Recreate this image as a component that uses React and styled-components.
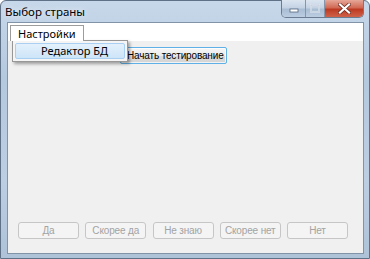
import styled, { createGlobalStyle } from 'styled-components';

const Global = createGlobalStyle`
  html, body {
    margin: 0;
    padding: 0;
    width: 370px;
    height: 259px;
    overflow: hidden;
    background: #ffffff;
  }
`;

const Window = styled.div`
  width: 370px;
  height: 259px;
  box-sizing: border-box;
  display: flex;
  flex-direction: column;
  border: 1px solid #5f7186;
  border-radius: 6px 6px 0 0;
  background: linear-gradient(180deg, #c7d8ea 0%, #b4c8de 30%, #bccee2 70%, #aec2d8 100%);
  font-family: 'Noto Sans', 'Liberation Sans', sans-serif;
`;

const TitleBar = styled.div`
  height: 21px;
  display: flex;
  align-items: flex-start;
  justify-content: space-between;
  padding-left: 4px;
`;

const Title = styled.span`
  font-size: 11.5px;
  line-height: 16px;
  margin-top: 3px;
  color: #000;
  text-shadow: 0 0 6px rgba(255, 255, 255, 0.9);
`;

const CaptionGroup = styled.div`
  display: flex;
  margin-right: 5px;
  margin-top: -1px;
  border: 1px solid #6b7c90;
  border-top: none;
  border-radius: 0 0 5px 5px;
  overflow: hidden;
`;

const CaptionButton = styled.div`
  width: ${p => p.$w}px;
  height: 17px;
  display: flex;
  align-items: center;
  justify-content: center;
  background: ${p =>
    p.$close
      ? 'linear-gradient(180deg, #e6a798 0%, #d06a55 45%, #bd3a22 55%, #d0624a 100%)'
      : 'linear-gradient(180deg, #dbe5f0 0%, #c4d3e4 45%, #a9bdd4 55%, #bccde0 100%)'};
  border-left: ${p => (p.$first ? 'none' : '1px solid #8596aa')};
`;

const Client = styled.div`
  flex: 1;
  margin: 0 5px 4px 6px;
  border: 1px solid #8193a7;
  background: #f0f0f0;
  display: flex;
  flex-direction: column;
  position: relative;
`;

const MenuStrip = styled.div`
  height: 18px;
  box-sizing: border-box;
  padding: 2px 0 0 2px;
  background: #ffffff;
  display: flex;
  align-items: flex-start;
`;

const MenuItem = styled.div`
  font-size: 11px;
  line-height: 15px;
  padding: 0 7px;
  height: 16px;
  box-sizing: border-box;
  border: 1px solid ${p => (p.$open ? '#9c9c9c' : 'transparent')};
  border-bottom: none;
  background: #fff;
  color: #000;
  position: relative;
  z-index: 3;
`;

const Body = styled.div`
  flex: 1;
  display: flex;
  flex-direction: column;
  padding: 6px 14px 14px 10px;
`;

const StartButton = styled.button`
  align-self: flex-start;
  margin-left: 102px;
  width: 107px;
  height: 17px;
  padding: 0 0 0 6px;
  text-align: left;
  white-space: nowrap;
  box-sizing: border-box;
  border: 1px solid #5fb0e6;
  border-radius: 2px;
  background: linear-gradient(180deg, #f6f6f6 0%, #ebebeb 50%, #dcdcdc 51%, #d4d4d4 100%);
  box-shadow: inset 0 0 0 1px rgba(255, 255, 255, 0.7);
  font-family: 'Liberation Sans', Arial, sans-serif;
  font-size: 10px;
  letter-spacing: -0.15px;
  color: #000;
`;

const ButtonRow = styled.div`
  margin-top: auto;
  display: flex;
  gap: 6.25px;
`;

const DisabledButton = styled.button`
  width: 61px;
  height: 17px;
  padding: 0;
  white-space: nowrap;
  box-sizing: border-box;
  border: 1px solid #c6c6c6;
  border-radius: 3px;
  background: #f4f4f4;
  color: #a3a3a3;
  font-family: 'Liberation Sans', Arial, sans-serif;
  font-size: 10px;
  letter-spacing: -0.15px;
`;

const Dropdown = styled.div`
  position: absolute;
  left: 4px;
  top: 17px;
  width: 116px;
  height: 22px;
  box-sizing: border-box;
  padding: 2px;
  background: #f5f5f5;
  border: 1px solid #979797;
  box-shadow: 2px 2px 3px rgba(0, 0, 0, 0.35);
  z-index: 2;
`;

const DropdownItem = styled.div`
  height: 16px;
  box-sizing: border-box;
  border: 1px solid #a9d0f2;
  border-radius: 2px;
  background: linear-gradient(180deg, #e4f1fc 0%, #cde4f8 100%);
  font-size: 11px;
  line-height: 14px;
  padding-left: 25px;
  color: #000;
`;

const answers = ['Да', 'Скорее да', 'Не знаю', 'Скорее нет', 'Нет'];

function Glyph({ type }) {
  if (type === 'min') {
    return (
      <svg width="10" height="8" viewBox="0 0 10 8">
        <rect x="1" y="4" width="8" height="3" fill="#fff" stroke="#55677d" strokeWidth="0.8" />
      </svg>
    );
  }
  if (type === 'max') {
    return (
      <svg width="10" height="9" viewBox="0 0 10 9">
        <rect x="1" y="1" width="8" height="7" fill="none" stroke="#eef3f8" strokeWidth="1.4" />
        <rect x="1" y="1" width="8" height="7" fill="none" stroke="#9badc2" strokeWidth="0.5" />
      </svg>
    );
  }
  return (
    <svg width="13" height="11" viewBox="0 0 13 11">
      <path d="M2 1.5 L11 9.5 M11 1.5 L2 9.5" stroke="#6b2a20" strokeWidth="3.6" strokeLinecap="square" />
      <path d="M2 1.5 L11 9.5 M11 1.5 L2 9.5" stroke="#ffffff" strokeWidth="2.2" strokeLinecap="square" />
    </svg>
  );
}

export default function App() {
  return (
    <>
      <Global />
      <Window>
        <TitleBar>
          <Title>Выбор страны</Title>
          <CaptionGroup>
            <CaptionButton $w={23} $first>
              <Glyph type="min" />
            </CaptionButton>
            <CaptionButton $w={18}>
              <Glyph type="max" />
            </CaptionButton>
            <CaptionButton $w={38} $close>
              <Glyph type="close" />
            </CaptionButton>
          </CaptionGroup>
        </TitleBar>
        <Client>
          <MenuStrip>
            <MenuItem $open>Настройки</MenuItem>
          </MenuStrip>
          <Body>
            <StartButton>Начать тестирование</StartButton>
            <ButtonRow>
              {answers.map(a => (
                <DisabledButton key={a} disabled>
                  {a}
                </DisabledButton>
              ))}
            </ButtonRow>
          </Body>
          <Dropdown>
            <DropdownItem>Редактор БД</DropdownItem>
          </Dropdown>
        </Client>
      </Window>
    </>
  );
}
